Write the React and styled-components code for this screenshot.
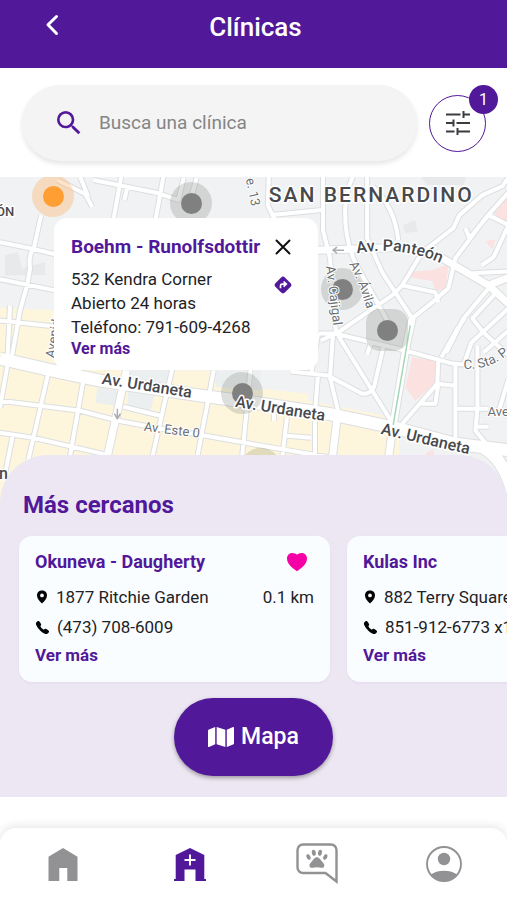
import React from 'react';
import styled, { createGlobalStyle } from 'styled-components';
import { MdSearch } from 'react-icons/md';
import { FaMap } from 'react-icons/fa';
import { IoCall } from 'react-icons/io5';

const purple = '#52189a';
const ink = '#222226';

const GlobalStyle = createGlobalStyle`
  *, *::before, *::after { box-sizing: border-box; }
  body {
    margin: 0;
    background: #fff;
    color: ${ink};
    font-family: Roboto, "Liberation Sans", sans-serif;
  }
  button { font: inherit; border: 0; padding: 0; background: none; cursor: pointer; }
  h1, h2, h3, p, ul { margin: 0; padding: 0; }
`;

const Screen = styled.div`
  display: flex;
  flex-direction: column;
  min-height: 100vh;
  overflow-x: hidden;
`;

const Header = styled.header`
  display: grid;
  grid-template-columns: 60px 1fr 60px;
  align-items: start;
  height: 68px;
  padding: 9px 20px 0 24px;
  background: ${purple};
  color: #fff;
`;

const BackButton = styled.button`
  display: grid;
  place-items: center;
  width: 56px;
  height: 32px;
  color: #fff;
`;

const Title = styled.h1`
  font-size: 26px;
  line-height: 36px;
  font-weight: 500;
  text-align: center;
`;

const SearchRow = styled.div`
  display: flex;
  align-items: center;
  gap: 12px;
  padding: 17px 21px 16px 22px;
`;

const SearchBox = styled.label`
  display: flex;
  align-items: center;
  flex: 1;
  min-width: 0;
  gap: 14px;
  height: 76px;
  padding: 0 31px;
  border-radius: 38px;
  background: #f4f4f4;
  box-shadow: 0 3px 5px rgba(0, 0, 0, 0.1);
  color: ${purple};

  svg { flex: none; }
`;

const SearchInput = styled.input`
  flex: 1;
  min-width: 0;
  padding: 0;
  border: 0;
  outline: 0;
  background: transparent;
  color: ${ink};
  font-family: inherit;
  font-size: 19px;
  line-height: 28px;

  &::placeholder { color: #858585; opacity: 1; }
`;

const FilterButton = styled.button`
  position: relative;
  display: grid;
  place-items: center;
  flex: none;
  width: 57px;
  height: 57px;
  border: 1px solid ${purple};
  border-radius: 50%;
  background: #fff;
  color: #3c3c40;
`;

const FilterCount = styled.span`
  position: absolute;
  top: -11px;
  right: -13px;
  width: 29px;
  height: 29px;
  border-radius: 50%;
  background: ${purple};
  color: #fff;
  font-size: 16px;
  line-height: 30px;
  text-align: center;
`;

const MapArea = styled.section`
  position: relative;
  flex: 1 0 325px;
  overflow: hidden;
  background: #f0f2f3;
`;

const MapLayer = styled.svg`
  position: absolute;
  top: 0;
  left: 0;
  width: 100%;
  height: 100%;
  pointer-events: none;
  font-family: Roboto, "Liberation Sans", sans-serif;
`;

const MapPin = styled.button`
  position: absolute;
  left: ${(p) => p.$x}px;
  top: ${(p) => p.$y}px;
  display: grid;
  place-items: center;
  width: 42px;
  height: 42px;
  margin: -21px 0 0 -21px;
  border-radius: ${(p) => (p.$square ? '14px' : '50%')};
  background: ${(p) => (p.$active ? 'rgba(255, 176, 96, 0.35)' : 'rgba(130, 135, 130, 0.27)')};

  &::before {
    content: '';
    width: 21px;
    height: 21px;
    border-radius: 50%;
    background: ${(p) => (p.$active ? '#ff9f33' : '#808080')};
  }
`;

const Popup = styled.article`
  position: absolute;
  top: 41px;
  left: 54px;
  display: grid;
  grid-template-columns: auto 20px;
  column-gap: 8px;
  width: 264px;
  padding: 17px 25px 11px 17px;
  border-radius: 13px;
  background: #fff;
`;

const PopupTitle = styled.h2`
  color: ${purple};
  font-size: 19px;
  line-height: 24px;
  font-weight: 700;
  white-space: nowrap;
`;

const PopupLines = styled.div`
  padding-top: 8px;
  font-size: 17px;
  line-height: 24px;
  white-space: nowrap;
`;

const IconButton = styled.button`
  display: grid;
  place-items: center;
  width: 20px;
  height: 24px;
  margin-top: ${(p) => p.$top || 0}px;
  color: #111;
`;

const MoreLink = styled.a`
  display: block;
  width: max-content;
  color: ${purple};
  font-size: ${(p) => (p.$large ? 17 : 16)}px;
  line-height: 20px;
  font-weight: 700;
  text-decoration: none;
`;

const Sheet = styled.section`
  position: relative;
  margin-top: -48px;
  padding: 34px 0 21px;
  border-radius: 48px 48px 0 0;
  background: #ede7f3;
`;

const SheetTitle = styled.h2`
  padding-left: 23px;
  color: ${purple};
  font-size: 24px;
  line-height: 32px;
  font-weight: 700;
`;

const Carousel = styled.ul`
  display: flex;
  gap: 17px;
  padding: 15px 19px 16px;
  overflow-x: auto;
  list-style: none;
  scrollbar-width: none;
`;

const Card = styled.li`
  flex: 0 0 311px;
  padding: 14px 16px;
  height: 146px;
  border-radius: 13px;
  background: #fafdff;
  box-shadow: 0 1px 3px rgba(80, 24, 154, 0.06);
`;

const CardHead = styled.div`
  display: flex;
  align-items: center;
  justify-content: space-between;
  height: 24px;
  padding-right: 6px;
`;

const CardTitle = styled.h3`
  color: ${purple};
  font-size: 18px;
  line-height: 24px;
  font-weight: 700;
  white-space: nowrap;
`;

const CardRow = styled.p`
  display: flex;
  align-items: center;
  gap: 7px;
  height: 30px;
  font-size: 17px;
  line-height: 24px;
  white-space: nowrap;

  &:first-of-type { margin-top: 8px; }
  &:last-of-type { margin-bottom: 3px; }
  svg { flex: none; color: #050505; }
`;

const Distance = styled.span`
  margin-left: auto;
`;

const MapButton = styled.button`
  display: flex;
  align-items: center;
  justify-content: center;
  gap: 7px;
  width: 159px;
  height: 78px;
  margin: 0 auto;
  border-radius: 39px;
  background: ${purple};
  box-shadow: 0 2px 4px rgba(0, 0, 0, 0.35);
  color: #fff;
  font-size: 23px;
  line-height: 32px;
  font-weight: 500;
`;

const TabBar = styled.nav`
  display: grid;
  grid-template-columns: repeat(4, 1fr);
  height: 72px;
  margin-top: 31px;
  border-radius: 16px 16px 0 0;
  background: #fff;
  box-shadow: 0 -2px 10px rgba(0, 0, 0, 0.1);
`;

const Tab = styled.a`
  display: grid;
  place-items: center;
  color: ${(p) => (p.$active ? purple : '#929295')};
`;

const ChevronIcon = () => (
  <svg width="14" height="22" viewBox="0 0 14 22" fill="none" stroke="currentColor" strokeWidth="3" strokeLinecap="round" strokeLinejoin="round" aria-hidden="true">
    <path d="M11.500 2.500 3 10.800l8.500 8.700" />
  </svg>
);

const FilterIcon = () => (
  <svg width="26" height="26" viewBox="0 0 26 26" fill="none" stroke="currentColor" strokeWidth="2" aria-hidden="true">
    <path d="M1 4.500h14.500M18.500 4.500h6.500M18.500 1v7M1 13h7.500M8.500 9.500v7M11.500 13H25M1 21.500h8.500M12.500 18v7M12.500 21.500H25" />
  </svg>
);

const PinIcon = () => (
  <svg width="14" height="14" viewBox="0 0 14 14" fill="currentColor" fillRule="evenodd" aria-hidden="true">
    <path d="M7 .5c3 0 5 2 5 4.900 0 3-2.500 5.800-5 8.100-2.500-2.300-5-5.100-5-8.100C2 2.500 4 .5 7 .5zm0 3a1.900 1.900 0 1 0 0 3.800 1.900 1.900 0 0 0 0-3.800z" />
  </svg>
);

const CloseIcon = () => (
  <svg width="18" height="18" viewBox="0 0 18 18" stroke="currentColor" strokeWidth="2" strokeLinecap="round" aria-hidden="true">
    <path d="M2.500 2.500l13 13M15.500 2.500l-13 13" />
  </svg>
);

const DirectionsIcon = () => (
  <svg width="20" height="20" viewBox="0 0 20 20" aria-hidden="true">
    <rect x="3.300" y="3.300" width="13.400" height="13.400" rx="3" transform="rotate(45 10 10)" fill={purple} />
    <path d="M7.500 13.200v-2.500c0-1 .5-1.600 1.600-1.600h3M10.600 6.500l2.700 2.600-2.700 2.500" fill="none" stroke="#fff" strokeWidth="1.700" />
  </svg>
);

const HeartIcon = () => (
  <svg width="22" height="20" viewBox="0 0 22 20" role="img" aria-label="Favorito">
    <path d="M11 19.300C7.500 16.800 1 12.300 1 6.700 1 3.300 3.300 1 6.200 1c2 0 3.800.7 4.800 1.800C12 1.700 13.800 1 15.800 1 18.700 1 21 3.300 21 6.700c0 5.600-6.500 10.100-10 12.600z" fill="#f400a6" />
  </svg>
);

const HomeIcon = () => (
  <svg width="30" height="33" viewBox="0 0 30 33" fill="currentColor" aria-hidden="true">
    <path d="M15 0 29.500 8.800V33H19.300V20h-8v13H.5V8.800z" />
  </svg>
);

const ClinicIcon = () => (
  <svg width="34" height="33" viewBox="0 0 34 33" fill="currentColor" aria-hidden="true">
    <path d="M17 0 31.300 7v24H33v2H22.500V21.500h-11V33H1v-2h1.700V7z" />
    <path d="M17 6.500v11M11.500 12h11" stroke="#fff" strokeWidth="1.900" />
  </svg>
);

const PetChatIcon = () => (
  <svg width="42" height="42" viewBox="0 0 42 42" fill="currentColor" aria-hidden="true">
    <path d="M7 1.500h28a5.500 5.500 0 0 1 5.500 5.500v31.500L29.500 30H7A5.500 5.500 0 0 1 1.500 24.500V7A5.500 5.500 0 0 1 7 1.500z" fill="none" stroke="currentColor" strokeWidth="2.400" />
    <ellipse cx="12.500" cy="14" rx="1.900" ry="2.900" transform="rotate(-25 12.500 14)" />
    <ellipse cx="17.800" cy="9.800" rx="2" ry="3.100" transform="rotate(-8 17.800 9.800)" />
    <ellipse cx="24" cy="9.800" rx="2" ry="3.100" transform="rotate(8 24 9.800)" />
    <ellipse cx="29.300" cy="14" rx="1.900" ry="2.900" transform="rotate(25 29.300 14)" />
    <path d="M20.900 14.300c2 0 3.200 1.900 4.700 3.700 1.600 1.900 3 3 2.700 4.900-.3 1.700-1.800 2-3.300 1.800-1.300-.2-2.600-.5-4.100-.5s-2.800.3-4.100.5c-1.500.2-3-.1-3.300-1.800-.3-1.900 1.100-3 2.700-4.900 1.500-1.800 2.700-3.700 4.700-3.700z" />
  </svg>
);

const ProfileIcon = () => (
  <svg width="38" height="38" viewBox="0 0 38 38" aria-hidden="true">
    <circle cx="19" cy="19" r="17" fill="none" stroke="currentColor" strokeWidth="1.900" />
    <circle cx="19" cy="14" r="6.200" fill="currentColor" />
    <path d="M6 29.500C9 27 13.500 25.700 19 25.700S29 27 32 29.500C29 34 24 36 19 36S9 34 6 29.500z" fill="currentColor" />
  </svg>
);

/* Street geometry, grouped by road width. */
const lanes = `
  M41 215L34 247Q28 255 30 268L27 285L20 310L12 355
  M0 242L30 248L55 254 M0 279L55 290 M0 320L55 326
  M57 180L85 194L92 207 M80 177L88 197
  M93 180L157 193L178 200 M127 187L124 200
  M121 176L113 220 M163 176L155 220 M183 178L178 200 M196 178L191 196
  M268 175L267 205L274 220 M271 215L321 210
  M322 175L322 230L329 258L335 333
  M355 170Q344 190 344 212Q344 240 354 262L386 320
  M366 176L366 238L381 272L411 318
  M372 187Q394 208 397 240
  M421 252L452 228L458 215L481 195L501 186L509 174
  M464 228L468 238L487 215L509 226 M509 190L484 218
  M484 218L454 258L447 288L431 302L411 318
  M421 252L401 285L391 295L337 332L320 340
  M401 285L434 292L437 302
  M487 288L462 318L445 352 M495 292L471 318L482 332L507 355
  M507 225L492 257L480 265 M471 273L509 271
  M507 308L470 342L463 362 M507 330L482 352 M440 357L455 330L463 318
  M318 333L334 333L404 350L451 363L463 364
  M337 335L394 427 M332 333L329 377L337 410
  M290 371L327 375L361 393Q369 394 373 386L382 347 M370 342L366 354
  M437 357L436 383L401 423 M436 383L454 385 M437 383L434 403L420 403
  M454 363L454 440 M454 408L487 408 M476 345L476 407L474 430L484 442 M474 426L487 426
  M507 378L498 408
  M10 305L7 367L0 407 M13 433L4 478
  M48 373L28 460 M83 380L69 460 M172 367L151 460 M213 370L196 460 M250 367L241 460
  M0 400L80 410L118 420L160 428L205 435L250 443L290 450L338 458
  M123 406L160 415 M0 432L33 437L107 454
  M286 417L281 460 M314 410L314 456 M286 435L310 437 M273 412L273 420
  M310 375L317 333 M317 375L314 412
`;
const streets = 'M126 370L106 460 M336 418L331 460 M411 318L406 340L391 430L387 460 M317 250L404 247L441 258L487 285L512 308 M487 285L510 276';
const avenue = 'M0 358L57 371L100 380L200 395L254 402L327 413L394 427L454 443L512 450 M482 447Q503 458 512 495';

const BaseMap = () => (
  <MapLayer viewBox="0 177 507 325" preserveAspectRatio="xMinYMin slice" aria-hidden="true">
    <rect x="0" y="170" width="520" height="340" fill="#f0f2f3" />
    <path d="M0 307L55 310V368L128 366V370H168L215 370L262 388L307 393V400L380 414L398 430V510H0z" fill="#fdf6dd" />
    <path d="M97 387L118 390L115 405L95 402z M128 385L155 390L150 410L127 405z M215 370H260V390L215 386z M128 366H168V385L130 382z" fill="#eceff0" />
    <path d="M405 272L430 270L447 264L444 288L434 291L431 281L409 277z M411 357L434 360V382L414 400L404 387z M490 209L507 195V224L500 223z M484 241L494 239L491 249z M425 452L432 449L433 455L424 455z" fill="#fbe1df" />
    <path d="M402 225L414 220L416 231L404 233z M420 177H465L462 185H425z M5 255L18 252L22 268L45 262V275L5 275z" fill="#e7e9eb" />
    <g fill="none" strokeLinejoin="round">
      <g stroke="#dcdee0">
        <path d={lanes} strokeWidth="6" />
        <path d={streets} strokeWidth="9" />
        <path d={avenue} strokeWidth="14" />
      </g>
      <g stroke="#fff">
        <path d={lanes} strokeWidth="4" />
        <path d={streets} strokeWidth="7" />
        <path d={avenue} strokeWidth="12" />
      </g>
      <path d="M409 325L392 424" stroke="#a4d8b8" strokeWidth="1.500" />
      <path d="M343 250H332M336 247L332 250L336 253 M117 408V417M114 413L117 418L120 413" stroke="#a9adb0" strokeWidth="1.500" />
    </g>
    <circle cx="260" cy="468" r="21" fill="#b8b48a" opacity="0.4" />
  </MapLayer>
);

const MapLabels = () => (
  <MapLayer viewBox="0 177 507 325" preserveAspectRatio="xMinYMin slice">
    <defs>
      <path id="panteon" d="M356 253Q410 243 460 274" />
      <path id="avila" d="M348 264Q359 283 369 320" />
      <path id="sta" d="M462 368Q495 371 520 340" />
    </defs>
    <g fill="#47494d" fontWeight="500" stroke="#fff" strokeWidth="3" paintOrder="stroke" strokeLinejoin="round">
      <text x="268" y="202" fontSize="21" letterSpacing="2">SAN BERNARDINO</text>
      <text x="-4" y="216" fontSize="13">ÓN</text>
      <text fontSize="16"><textPath href="#panteon">Av. Panteón</textPath></text>
      <text fontSize="16" transform="translate(101 383) rotate(9)">Av. Urdaneta</text>
      <text fontSize="16" transform="translate(234 406) rotate(9)">Av. Urdaneta</text>
      <text fontSize="16" transform="translate(379 433) rotate(13)">Av. Urdaneta</text>
      <text x="-1" y="478" fontSize="16">n</text>
    </g>
    <g fill="#6b6f73" stroke="#fff" strokeWidth="2" paintOrder="stroke" strokeLinejoin="round">
      <text fontSize="13" transform="translate(325 266) rotate(83)">Av. Cajigal</text>
      <text fontSize="13"><textPath href="#avila">Av. Ávila</textPath></text>
      <text fontSize="13" transform="translate(143 430) rotate(7)">Av. Este 0</text>
      <text fontSize="13" transform="translate(245 179) rotate(78)">e. 13</text>
      <text fontSize="13" transform="translate(54 358) rotate(-80)">Avenida</text>
      <text fontSize="13"><textPath href="#sta">C. Sta. P</textPath></text>
      <text x="486" y="415" fontSize="13">Ave</text>
    </g>
  </MapLayer>
);

const pins = [
  { x: 53, y: 19, active: true },
  { x: 191, y: 26 },
  { x: 342, y: 112 },
  { x: 387, y: 153, square: true },
  { x: 242, y: 216 },
];

const clinics = [
  { name: 'Okuneva - Daugherty', address: '1877 Ritchie Garden', phone: '(473) 708-6009', distance: '0.1 km', favorite: true },
  { name: 'Kulas Inc', address: '882 Terry Square', phone: '851-912-6773 x1', distance: '' },
];

const tabs = [
  { label: 'Inicio', Icon: HomeIcon },
  { label: 'Clínicas', Icon: ClinicIcon, active: true },
  { label: 'Mensajes', Icon: PetChatIcon },
  { label: 'Perfil', Icon: ProfileIcon },
];

export default function App() {
  return (
    <Screen>
      <GlobalStyle />
      <Header>
        <BackButton aria-label="Volver"><ChevronIcon /></BackButton>
        <Title>Clínicas</Title>
      </Header>
      <SearchRow>
        <SearchBox>
          <MdSearch size={32} aria-hidden="true" />
          <SearchInput type="search" placeholder="Busca una clínica" aria-label="Busca una clínica" />
        </SearchBox>
        <FilterButton aria-label="Filtros">
          <FilterIcon />
          <FilterCount>1</FilterCount>
        </FilterButton>
      </SearchRow>
      <MapArea aria-label="Mapa de clínicas">
        <BaseMap />
        {pins.map((pin, i) => (
          <MapPin key={i} $x={pin.x} $y={pin.y} $active={pin.active} $square={pin.square} aria-label={`Clínica ${i + 1}`} />
        ))}
        <MapLabels />
        <Popup>
          <PopupTitle>Boehm - Runolfsdottir</PopupTitle>
          <IconButton aria-label="Cerrar"><CloseIcon /></IconButton>
          <PopupLines>
            <p>532 Kendra Corner</p>
            <p>Abierto 24 horas</p>
            <p>Teléfono: 791-609-4268</p>
            <MoreLink href="#boehm">Ver más</MoreLink>
          </PopupLines>
          <IconButton $top={14} aria-label="Cómo llegar"><DirectionsIcon /></IconButton>
        </Popup>
      </MapArea>
      <Sheet>
        <SheetTitle>Más cercanos</SheetTitle>
        <Carousel>
          {clinics.map((clinic) => (
            <Card key={clinic.name}>
              <CardHead>
                <CardTitle>{clinic.name}</CardTitle>
                {clinic.favorite && <HeartIcon />}
              </CardHead>
              <CardRow>
                <PinIcon />
                {clinic.address}
                <Distance>{clinic.distance}</Distance>
              </CardRow>
              <CardRow>
                <IoCall size={15} aria-hidden="true" />
                {clinic.phone}
              </CardRow>
              <MoreLink $large href="#clinica">Ver más</MoreLink>
            </Card>
          ))}
        </Carousel>
        <MapButton>
          <FaMap size={26} aria-hidden="true" />
          Mapa
        </MapButton>
      </Sheet>
      <TabBar>
        {tabs.map(({ label, Icon, active }) => (
          <Tab key={label} href="#" aria-label={label} $active={active}><Icon /></Tab>
        ))}
      </TabBar>
    </Screen>
  );
}
